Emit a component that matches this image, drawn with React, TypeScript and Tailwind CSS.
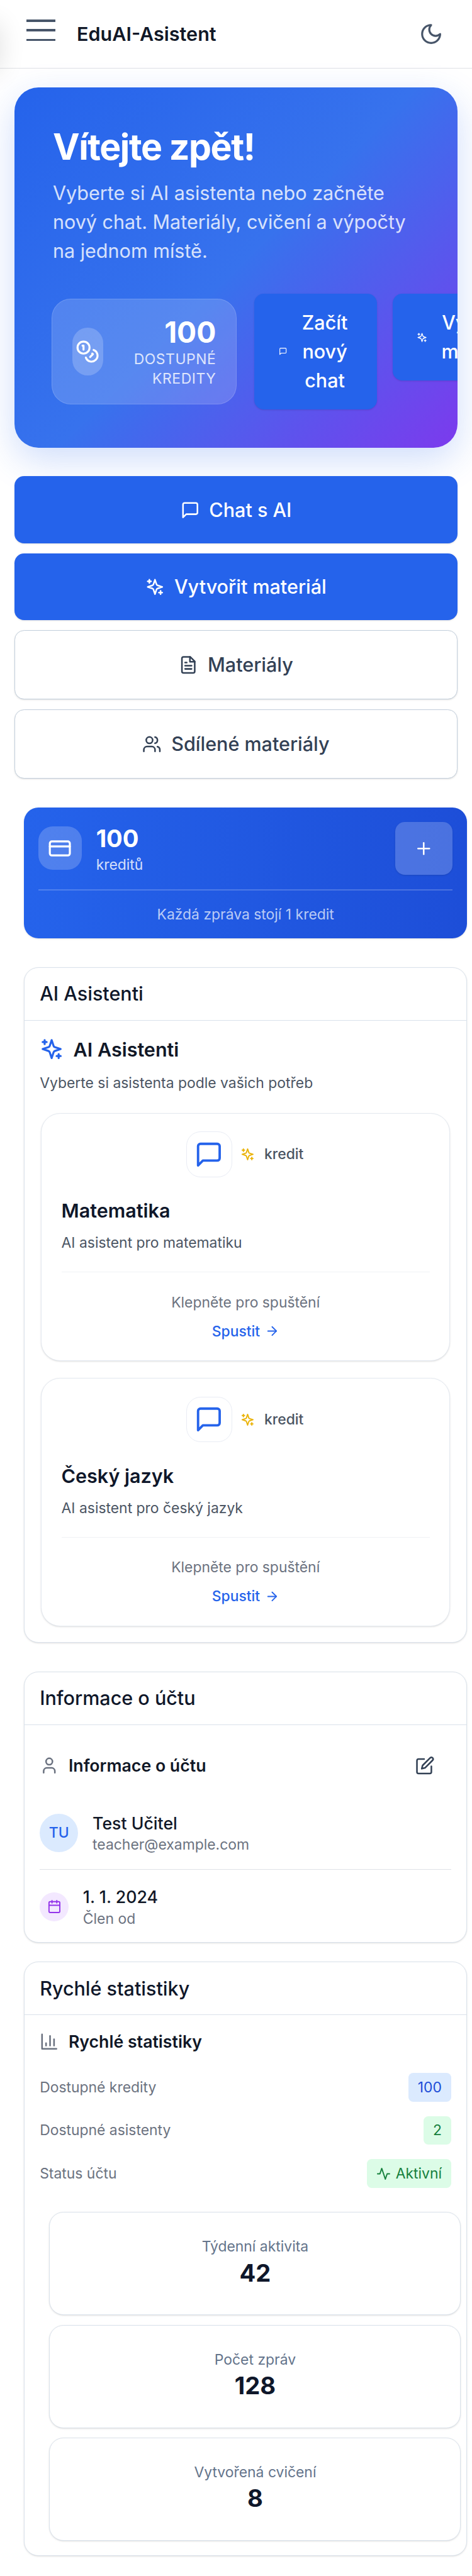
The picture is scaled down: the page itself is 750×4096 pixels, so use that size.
import React from "react";

type IconProps = { className?: string; children?: React.ReactNode };

function Icon({ className, children }: IconProps) {
  return (
    <svg
      viewBox="0 0 24 24"
      fill="none"
      stroke="currentColor"
      strokeWidth={2}
      strokeLinecap="round"
      strokeLinejoin="round"
      className={"shrink-0 " + (className ?? "")}
    >
      {children}
    </svg>
  );
}

const Moon = ({ className }: IconProps) => (
  <Icon className={className}>
    <path d="M12 3a6 6 0 0 0 9 9 9 9 0 1 1-9-9Z" />
  </Icon>
);

const Message = ({ className }: IconProps) => (
  <Icon className={className}>
    <path d="M21 15a2 2 0 0 1-2 2H7l-4 4V5a2 2 0 0 1 2-2h14a2 2 0 0 1 2 2z" />
  </Icon>
);

const Sparkles = ({ className }: IconProps) => (
  <Icon className={className}>
    <path d="m12 3-1.912 5.813a2 2 0 0 1-1.275 1.275L3 12l5.813 1.912a2 2 0 0 1 1.275 1.275L12 21l1.912-5.813a2 2 0 0 1 1.275-1.275L21 12l-5.813-1.912a2 2 0 0 1-1.275-1.275L12 3Z" />
    <path d="M5 3v4" />
    <path d="M19 17v4" />
    <path d="M3 5h4" />
    <path d="M17 19h4" />
  </Icon>
);

const FileText = ({ className }: IconProps) => (
  <Icon className={className}>
    <path d="M14.5 2H6a2 2 0 0 0-2 2v16a2 2 0 0 0 2 2h12a2 2 0 0 0 2-2V7.5L14.5 2z" />
    <polyline points="14 2 14 8 20 8" />
    <path d="M16 13H8" />
    <path d="M16 17H8" />
    <path d="M10 9H8" />
  </Icon>
);

const Users = ({ className }: IconProps) => (
  <Icon className={className}>
    <path d="M16 21v-2a4 4 0 0 0-4-4H6a4 4 0 0 0-4 4v2" />
    <circle cx="9" cy="7" r="4" />
    <path d="M22 21v-2a4 4 0 0 0-3-3.87" />
    <path d="M16 3.13a4 4 0 0 1 0 7.75" />
  </Icon>
);

const User = ({ className }: IconProps) => (
  <Icon className={className}>
    <path d="M19 21v-2a4 4 0 0 0-4-4H9a4 4 0 0 0-4 4v2" />
    <circle cx="12" cy="7" r="4" />
  </Icon>
);

const Coins = ({ className }: IconProps) => (
  <Icon className={className}>
    <circle cx="8" cy="8" r="6" />
    <path d="M18.09 10.37A6 6 0 1 1 10.34 18" />
    <path d="M7 6h1v4" />
    <path d="m16.71 13.88.7.71-2.82 2.82" />
  </Icon>
);

const CreditCard = ({ className }: IconProps) => (
  <Icon className={className}>
    <rect width="20" height="14" x="2" y="5" rx="2" />
    <path d="M2 10h20" />
  </Icon>
);

const Plus = ({ className }: IconProps) => (
  <Icon className={className}>
    <path d="M5 12h14" />
    <path d="M12 5v14" />
  </Icon>
);

const ArrowRight = ({ className }: IconProps) => (
  <Icon className={className}>
    <path d="M5 12h14" />
    <path d="m12 5 7 7-7 7" />
  </Icon>
);

const Edit = ({ className }: IconProps) => (
  <Icon className={className}>
    <path d="M11 4H4a2 2 0 0 0-2 2v14a2 2 0 0 0 2 2h14a2 2 0 0 0 2-2v-7" />
    <path d="M18.5 2.5a2.12 2.12 0 0 1 3 3L12 15l-4 1 1-4Z" />
  </Icon>
);

const Calendar = ({ className }: IconProps) => (
  <Icon className={className}>
    <rect width="18" height="18" x="3" y="4" rx="2" />
    <path d="M16 2v4" />
    <path d="M8 2v4" />
    <path d="M3 10h18" />
  </Icon>
);

const BarChart = ({ className }: IconProps) => (
  <Icon className={className}>
    <path d="M3 3v18h18" />
    <path d="M18 17V9" />
    <path d="M13 17V5" />
    <path d="M8 17v-3" />
  </Icon>
);

const Activity = ({ className }: IconProps) => (
  <Icon className={className}>
    <path d="M22 12h-4l-3 9L9 3l-3 9H2" />
  </Icon>
);

function Header() {
  return (
    <header className="flex h-14.25 items-center border-b border-[#dfe1e6] pl-5.5 pr-6">
      <button className="-mt-1.5 flex w-6 flex-col gap-1.5">
        <span className="h-0.5 w-full bg-[#475569]" />
        <span className="h-0.5 w-full bg-[#475569]" />
        <span className="h-0.5 w-full bg-[#475569]" />
      </button>
      <span className="ml-4.5 flex-1 text-base font-semibold text-[#111827]">EduAI-Asistent</span>
      <Moon className="size-5 text-[#475569]" />
    </header>
  );
}

function Hero() {
  return (
    <section className="mx-3 mt-4 h-75 overflow-hidden rounded-[38px] bg-[linear-gradient(135deg,#2563eb_0%,#3772ed_50%,#7c3aed_100%)] px-8 pt-8 shadow-[0_19px_57px_rgba(37,99,235,0.22)]">
      <h1 className="text-3xl leading-9 font-bold tracking-tight text-white">Vítejte zpět!</h1>
      <p className="mt-2 text-base leading-6 text-white/80">
        Vyberte si AI asistenta nebo začněte nový chat. Materiály, cvičení a výpočty na jednom místě.
      </p>
      <div className="mt-6 flex w-120 items-center">
        <div className="-ml-0.25 flex h-22 w-38.5 shrink-0 items-center rounded-2xl border border-white/15 bg-white/16 px-[31.5px]">
          <span className="flex h-10 w-6.5 shrink-0 items-center justify-center rounded-full bg-white/20 text-white">
            <Coins className="size-5" />
          </span>
          <span className="ml-auto flex w-22 flex-col items-end text-right">
            <span className="text-2xl leading-7.25 font-bold text-white">100</span>
            <span className="text-xs leading-4 tracking-wide text-white/80 uppercase">Dostupné kredity</span>
          </span>
        </div>
        <div className="ml-3.75 flex items-start gap-3.25">
          <button className="flex w-25.5 items-center gap-2 rounded-lg bg-[#2563eb] px-5 py-3 text-base leading-6 font-medium text-white shadow-sm">
            <Message className="size-1.75" />
            <span className="flex-1 text-center">Začít nový chat</span>
          </button>
          <button className="flex w-31.5 items-center gap-2 rounded-lg bg-[#2563eb] px-5 py-3 text-base leading-6 font-medium text-white shadow-sm">
            <Sparkles className="size-2.25" />
            <span className="flex-1 text-center">Vytvořit materiál</span>
          </button>
        </div>
      </div>
    </section>
  );
}

const primaryAction =
  "flex h-14 items-center justify-center gap-2 rounded-lg bg-[#2563eb] text-base font-medium text-white shadow-sm";
const secondaryAction =
  "flex h-14.5 items-center justify-center gap-2 rounded-lg border border-[#c3cfdc] bg-white text-base font-medium text-[#334155] shadow-sm";

function Actions() {
  return (
    <div className="mx-3 mt-6 flex flex-col gap-2">
      <button className={primaryAction}>
        <Message className="size-4" />
        Chat s AI
      </button>
      <button className={primaryAction}>
        <Sparkles className="size-4" />
        Vytvořit materiál
      </button>
      <button className={secondaryAction}>
        <FileText className="size-4" />
        Materiály
      </button>
      <button className={secondaryAction}>
        <Users className="size-4" />
        Sdílené materiály
      </button>
    </div>
  );
}

function Credits() {
  return (
    <section className="mt-6 h-27.25 rounded-xl bg-[linear-gradient(90deg,#2563eb,#1d4ed8)] p-3 shadow-sm">
      <div className="flex h-11 items-center">
        <span className="flex size-9 items-center justify-center rounded-xl bg-white/20 text-white">
          <CreditCard className="size-5" />
        </span>
        <div className="ml-3 flex-1">
          <div className="text-xl leading-7 font-bold text-white">100</div>
          <div className="text-xs leading-4 text-white/80">kreditů</div>
        </div>
        <button className="flex h-11 w-12 items-center justify-center rounded-lg bg-white/20 text-white shadow-sm">
          <Plus className="size-4" />
        </button>
      </div>
      <div className="mt-3 border-t-2 border-white/20 pt-3 text-center text-xs leading-4 text-white/70">
        Každá zpráva stojí 1 kredit
      </div>
    </section>
  );
}

function Panel({ title, className, children }: { title: string; className: string; children: React.ReactNode }) {
  return (
    <section className={"rounded-xl border border-[#dae2eb] bg-white shadow-sm " + className}>
      <h2 className="flex h-11 items-center border-b border-[#dae2eb] px-[24px] text-base font-medium text-[#0f172a]">
        {title}
      </h2>
      <div className="px-[24px] pt-3">{children}</div>
    </section>
  );
}

function AssistantCard({ name, description }: { name: string; description: string }) {
  return (
    <article className="mx-0.25 flex h-51.75 flex-col rounded-2xl border border-[#e4e9f0] bg-white px-[31.5px] pt-3.75 shadow-sm">
      <div className="flex items-center justify-center gap-1.75 pr-0.25">
        <span className="flex size-9.5 items-center justify-center rounded-xl border border-[#e9ecf4] text-[#2563eb]">
          <Message className="size-6" />
        </span>
        <span className="flex items-center gap-2 text-xs leading-4 font-medium text-[#4b5563]">
          <Sparkles className="size-3 text-[#eab308]" />
          kredit
        </span>
      </div>
      <h4 className="mt-4 text-base leading-6 font-semibold text-[#0f172a]">{name}</h4>
      <p className="mt-1.75 text-xs leading-4 text-[#4b5563]">{description}</p>
      <div className="mt-4 flex flex-col items-center border-t border-[#f0f2f5] pt-4.25">
        <span className="text-xs leading-4 text-[#6b7280]">Klepněte pro spuštění</span>
        <span className="mt-2 flex items-center gap-1 text-xs leading-4 font-medium text-[#2563eb]">
          Spustit
          <ArrowRight className="size-3" />
        </span>
      </div>
    </article>
  );
}

function Assistants() {
  return (
    <Panel title="AI Asistenti" className="mt-6 h-140.75">
      <h3 className="flex h-6 items-center gap-2 text-base font-semibold text-[#111827]">
        <Sparkles className="size-5 text-[#2563eb]" />
        AI Asistenti
      </h3>
      <p className="mt-2 text-xs leading-4 text-[#4b5563]">Vyberte si asistenta podle vašich potřeb</p>
      <div className="mt-4.25 flex flex-col gap-3.5">
        <AssistantCard name="Matematika" description="AI asistent pro matematiku" />
        <AssistantCard name="Český jazyk" description="AI asistent pro český jazyk" />
      </div>
    </Panel>
  );
}

function Account() {
  return (
    <Panel title="Informace o účtu" className="mt-6 h-56.5">
      <div className="flex h-11 items-center">
        <User className="size-4 text-[#6b7280]" />
        <h3 className="ml-2 flex-1 text-sm font-semibold text-[#111827]">Informace o účtu</h3>
        <button className="flex h-11 w-12 items-center justify-end pr-3.5 text-[#334155]">
          <Edit className="size-4" />
        </button>
      </div>
      <div className="mt-4 flex items-center gap-3 border-b border-[#dfe2e7] pb-3">
        <span className="flex size-8 items-center justify-center rounded-full bg-[#dbeafe] text-xs font-medium text-[#2563eb]">
          TU
        </span>
        <div>
          <div className="text-sm leading-5 font-medium text-[#111827]">Test Učitel</div>
          <div className="text-xs leading-4 text-[#6b7280]">teacher@example.com</div>
        </div>
      </div>
      <div className="mt-3.25 flex items-center gap-3">
        <span className="flex size-6 items-center justify-center rounded-full bg-[#f3e8ff] text-[#9333ea]">
          <Calendar className="size-3" />
        </span>
        <div>
          <div className="text-sm leading-5 font-medium text-[#111827]">1. 1. 2024</div>
          <div className="text-xs leading-4 text-[#6b7280]">Člen od</div>
        </div>
      </div>
    </Panel>
  );
}

function StatRow({ label, badge, children }: { label: string; badge: string; children: React.ReactNode }) {
  return (
    <div className="flex h-6 items-center justify-between text-xs">
      <span className="text-[#6b7280]">{label}</span>
      <span className={"flex h-6 items-center gap-1 rounded-sm px-2 " + badge}>{children}</span>
    </div>
  );
}

function StatCard({ label, value }: { label: string; value: string }) {
  return (
    <div className="flex h-21.5 flex-col items-center justify-center rounded-xl border border-[#dae2eb] bg-white shadow-sm">
      <span className="text-xs leading-4 text-[#64748b]">{label}</span>
      <span className="text-xl leading-7 font-bold text-[#0f172a]">{value}</span>
    </div>
  );
}

function Stats() {
  return (
    <Panel title="Rychlé statistiky" className="mt-4 h-123.75">
      <h3 className="flex h-5 items-center gap-2 text-sm font-semibold text-[#111827]">
        <BarChart className="size-4 text-[#6b7280]" />
        Rychlé statistiky
      </h3>
      <div className="mt-4 flex flex-col gap-3">
        <StatRow label="Dostupné kredity" badge="bg-[#dbeafe] text-[#1d4ed8]">
          100
        </StatRow>
        <StatRow label="Dostupné asistenty" badge="bg-[#dcfce7] text-[#15803d]">
          2
        </StatRow>
        <StatRow label="Status účtu" badge="bg-[#dcfce7] text-[#15803d]">
          <Activity className="size-3" />
          Aktivní
        </StatRow>
      </div>
      <div className="-mr-2 ml-2 mt-5 flex flex-col gap-2">
        <StatCard label="Týdenní aktivita" value="42" />
        <StatCard label="Počet zpráv" value="128" />
        <StatCard label="Vytvořená cvičení" value="8" />
      </div>
    </Panel>
  );
}

export default function App() {
  return (
    <div className="relative h-[4096px] w-[750px] overflow-hidden bg-white font-['Inter',sans-serif] antialiased [--radius-2xl:30.5px] [--radius-lg:15.3px] [--radius-sm:7.6px] [--radius-xl:22.9px] [--spacing:7.632px] [--text-2xl:46.2px] [--text-3xl:57.2px] [--text-base:30.53px] [--text-sm:26.7px] [--text-xl:38.2px] [--text-xs:22.9px]">
      <div className="pointer-events-none absolute top-5 -left-10 h-10 w-10 shadow-[0_0_40px_rgba(0,0,0,0.12)]" />
      <Header />
      <Hero />
      <Actions />
      <main className="ml-5 w-92.25">
        <Credits />
        <Assistants />
        <Account />
        <Stats />
      </main>
    </div>
  );
}
